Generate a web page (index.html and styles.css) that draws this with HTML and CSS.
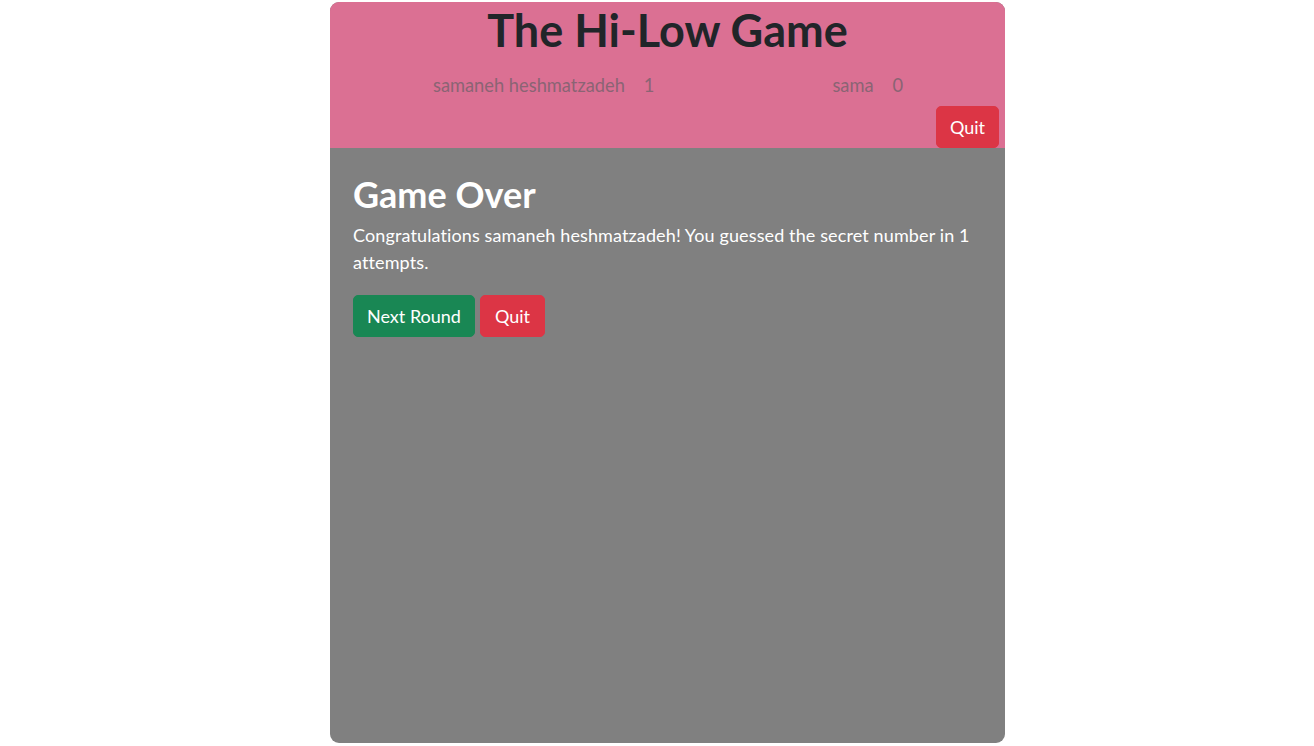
FILE: index.html
```html
<!DOCTYPE html>
<html lang="en">
<head>
<meta charset="utf-8">
<title>The Hi-Low Game</title>
<link rel="stylesheet" href="styles.css">
</head>
<body>
<div class="card">
  <header class="header">
    <h1 class="title">The Hi-Low Game</h1>
    <div class="players">
      <div class="player p1"><span class="name">samaneh heshmatzadeh</span><span class="score">1</span></div>
      <div class="player p2"><span class="name">sama</span><span class="score">0</span></div>
    </div>
    <div class="header-actions">
      <button class="btn btn-danger">Quit</button>
    </div>
  </header>
  <main class="content">
    <h2 class="over">Game Over</h2>
    <p class="msg">Congratulations samaneh heshmatzadeh! You guessed the secret number in 1 attempts.</p>
    <div class="actions">
      <button class="btn btn-success">Next Round</button>
      <button class="btn btn-danger">Quit</button>
    </div>
  </main>
</div>
</body>
</html>
```

FILE: styles.css
```css
* { box-sizing: border-box; }
html, body { margin: 0; padding: 0; background: #fff; }
body {
  font-family: "Lato", "Open Sans", sans-serif;
  font-size: 18px;
  line-height: 1.5;
  color: #212529;
}
.card {
  width: 675px;
  height: 741px;
  margin: 2px 0 0 330px;
  border-radius: 9px;
  overflow: hidden;
  display: flex;
  flex-direction: column;
  background: #808080;
}
.header {
  background: #db7093;
  height: 146px;
  display: flex;
  flex-direction: column;
}
.title {
  margin: 0;
  padding-top: 0;
  text-align: center;
  font-size: 45px;
  font-weight: 700;
  line-height: 56px;
  color: #212529;
}
.players {
  display: flex;
  margin-top: 14px;
  height: 27px;
  color: #8a6474;
  font-size: 18.3px;
  line-height: 27px;
}
.player { display: flex; gap: 19px; }
.p1 { margin-left: 103px; }
.p2 { margin-left: 178px; }
.header-actions {
  margin-top: auto;
  display: flex;
  justify-content: flex-end;
  padding-right: 6px;
}
.btn {
  font-family: inherit;
  font-size: 18px;
  line-height: 26px;
  padding: 7px 14px;
  border: 1px solid transparent;
  border-radius: 5px;
  color: #fff;
  cursor: pointer;
}
.btn-danger { background: #dc3545; border-color: #dc3545; }
.btn-success { background: #198754; border-color: #198754; }
.header-actions .btn { padding: 7px 13px; }
.content {
  flex: 1;
  padding: 26px 23px;
}
.over {
  margin: 0 0 8px;
  font-size: 36px;
  font-weight: 700;
  line-height: 40px;
  color: #fff;
}
.msg {
  margin: 0 0 19px;
  color: #fff;
  font-size: 18px;
  letter-spacing: 0.12px;
  line-height: 27px;
}
.actions { display: flex; gap: 5px; }
.actions .btn-success { padding: 7px 13px; }
.actions .btn-danger { padding: 7px 14px; }
```
